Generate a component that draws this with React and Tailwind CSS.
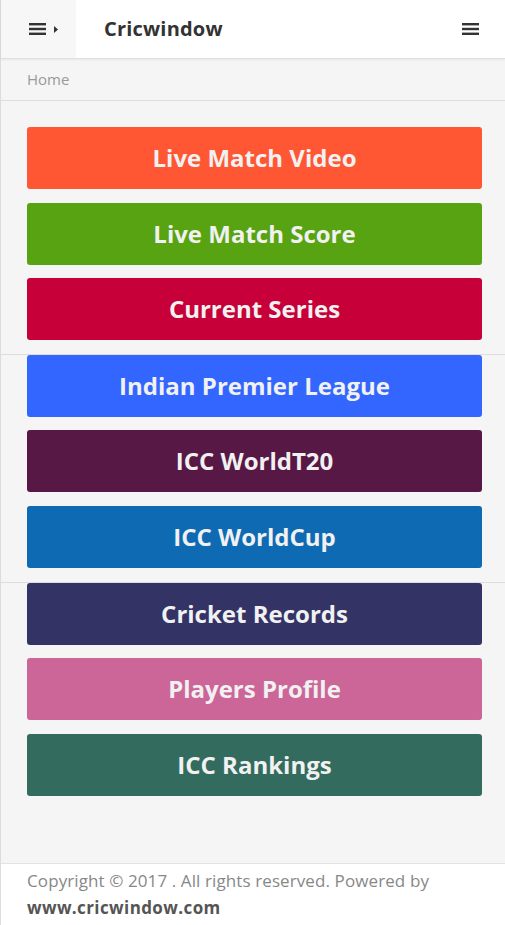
const items = [
  { label: 'Live Match Video', bg: 'bg-[#ff5733]', gap: '' },
  { label: 'Live Match Score', bg: 'bg-[#58a312]', gap: 'mt-[14px]' },
  { label: 'Current Series', bg: 'bg-[#c70039]', gap: 'mt-[13px]' },
  { label: 'Indian Premier League', bg: 'bg-[#3366ff]', gap: 'mt-[14px] border-t border-[#dddddd]' },
  { label: 'ICC WorldT20', bg: 'bg-[#581845]', gap: 'mt-[13px]' },
  { label: 'ICC WorldCup', bg: 'bg-[#0e6ab3]', gap: 'mt-[14px]' },
  { label: 'Cricket Records', bg: 'bg-[#333366]', gap: 'mt-[14px] border-t border-[#dddddd]' },
  { label: 'Players Profile', bg: 'bg-[#cc6699]', gap: 'mt-[13px]' },
  { label: 'ICC Rankings', bg: 'bg-[#336b5f]', gap: 'mt-[14px]' },
];

function Bars({ className }) {
  return (
    <svg className={className} width="17" height="12" viewBox="0 0 17 12" fill="#333">
      <rect x="0" y="0" width="17" height="2.4" />
      <rect x="0" y="4.8" width="17" height="2.4" />
      <rect x="0" y="9.6" width="17" height="2.4" />
    </svg>
  );
}

export default function App() {
  return (
    <div className="min-h-[925px] flex flex-col bg-[#f5f5f5] font-['Open_Sans',sans-serif] border-l border-[#dcdcdc]">
      {/* header */}
      <header className="h-[59px] flex items-center bg-white border-b border-[#e0e0e0] shadow-[0_1px_2px_rgba(0,0,0,0.06)]">
        <div className="w-[75px] h-full flex items-center bg-[#f7f7f7] pl-[28px] gap-[8px]">
          <Bars />
          <svg width="4" height="7" viewBox="0 0 4 7" fill="#333">
            <path d="M0 0 L4 3.5 L0 7 Z" />
          </svg>
        </div>
        <div className="flex-1 pl-[28px] text-[20px] font-bold text-[#333] tracking-[0.2px]">Cricwindow</div>
        <Bars className="mr-[26px]" />
      </header>

      {/* breadcrumb */}
      <div className="h-[42px] flex items-center px-[26px] text-[15px] text-[#999] border-b border-[#dddddd]">Home</div>

      {/* menu */}
      <main className="flex-1 pt-[26px] pb-[66px]">
        {items.map((it) => (
          <div key={it.label} className={it.gap}>
            <div className="pl-[26px] pr-[23px]">
              <div
                className={`${it.bg} h-[62px] rounded-[3px] flex items-center justify-center text-[24px] font-bold text-[#f1f1f1]`}
              >
                {it.label}
              </div>
            </div>
          </div>
        ))}
      </main>

      {/* footer */}
      <footer className="bg-white border-t border-[#e3e3e3] px-[26px] pt-[3px] pb-[4px] text-[17px] tracking-[0.1px] leading-[27px] text-[#888]">
        <div>Copyright © 2017 . All rights reserved. Powered by</div>
        <div className="font-bold text-[#555] tracking-[0.4px]">www.cricwindow.com</div>
      </footer>
    </div>
  );
}
